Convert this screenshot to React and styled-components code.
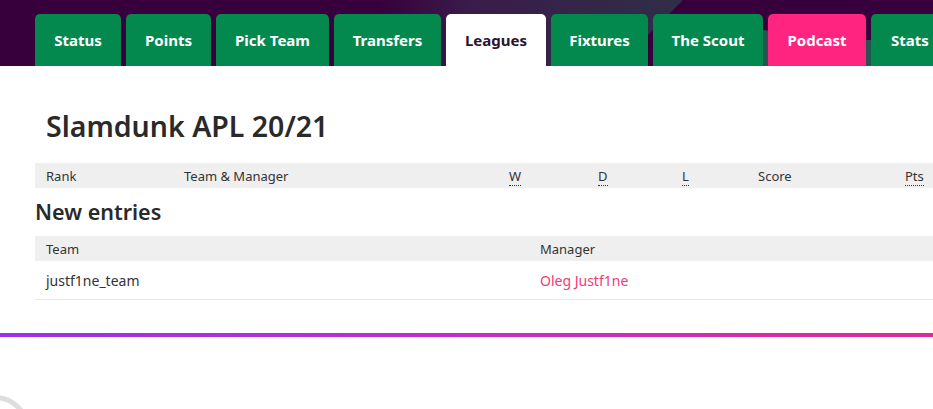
import React from "react";
import styled, { createGlobalStyle } from "styled-components";

const Global = createGlobalStyle`
  html, body { margin: 0; padding: 0; background: #fff; overflow: hidden; }
  body { font-family: "Noto Sans", "Open Sans", sans-serif; color: #37003c; }
`;

const Page = styled.div`
  width: 933px;
  height: 409px;
  position: relative;
  overflow: hidden;
`;

const Header = styled.header`
  position: relative;
  height: 66px;
  background: #37003c;
  overflow: hidden;
  &::before {
    content: "";
    position: absolute;
    inset: 0;
    background: linear-gradient(to right, #37003c 0px, #37003c 380px, #3a1c4a 470px, #2f2e48 680px);
    clip-path: polygon(0 0, 683px 0, 617px 66px, 0 66px);
  }
  &::after {
    content: "";
    position: absolute;
    inset: 0;
    background: #265450;
    clip-path: polygon(700px 66px, 740px 28px, 933px 46px, 933px 66px);
  }
`;

const Tabs = styled.nav`
  position: relative;
  z-index: 1;
  display: flex;
  gap: 5px;
  padding: 14px 0 0 35px;
  height: 52px;
`;

const Tab = styled.div`
  flex: none;
  width: ${(p) => p.$w}px;
  height: 52px;
  border-radius: 5px 5px 0 0;
  background: ${(p) => (p.$active ? "#ffffff" : p.$pink ? "#fe2480" : "#03884e")};
  color: ${(p) => (p.$active ? "#2b1430" : "#ffffff")};
  font-weight: 700;
  font-size: 15px;
  display: flex;
  align-items: center;
  justify-content: center;
  box-sizing: border-box;
  white-space: nowrap;
`;

const Main = styled.main`
  padding: 0 0 0 35px;
  width: 900px;
`;

const Title = styled.h2`
  margin: 0;
  padding: 40px 0 0 11px;
  height: 57px;
  font-size: 28.5px;
  font-weight: 600;
  color: #2a2a2a;
  line-height: 40px;
`;

const HeadRow = styled.div`
  display: grid;
  grid-template-columns: ${(p) => p.$cols};
  height: 25px;
  align-items: center;
  background: #efefef;
  font-size: 13px;
  color: #333;
  margin-top: ${(p) => p.$mt || 0}px;
`;

const Cell = styled.div`
  padding-left: 11px;
  white-space: nowrap;
`;

const Abbr = styled.abbr`
  text-decoration: none;
  border-bottom: 1px dotted #333;
`;

const SubTitle = styled.h3`
  margin: 0;
  padding-top: 12px;
  height: 36px;
  box-sizing: border-box;
  font-size: 21.5px;
  font-weight: 600;
  color: #2a2a2a;
  line-height: 24px;
`;

const BodyRow = styled.div`
  display: grid;
  grid-template-columns: ${(p) => p.$cols};
  height: 38px;
  align-items: center;
  border-bottom: 1px solid #e8e8e8;
  font-size: 14px;
  color: #333;
`;

const ManagerLink = styled.span`
  color: #f23a78;
`;

const Divider = styled.div`
  height: 4px;
  margin-top: 33px;
  width: 933px;
  background: linear-gradient(to right, #9a31ea, #c62ec6 55%, #e02a96);
`;

const Spinner = styled.div`
  position: absolute;
  left: -40px;
  top: 395px;
  width: 70px;
  height: 70px;
  border-radius: 50%;
  border: 5px solid #dedede;
  box-sizing: border-box;
`;

const tabs = [
  { t: "Status", w: 86 },
  { t: "Points", w: 85 },
  { t: "Pick Team", w: 113 },
  { t: "Transfers", w: 107 },
  { t: "Leagues", w: 100, active: true },
  { t: "Fixtures", w: 97 },
  { t: "The Scout", w: 110 },
  { t: "Podcast", w: 98, pink: true },
  { t: "Stats", w: 78 },
];

const standingCols = "138px 325px 89px 84px 76px 147px 41px";
const entryCols = "494px 1fr";

export default function App() {
  return (
    <Page>
      <Global />
      <Header>
        <Tabs>
          {tabs.map((x) => (
            <Tab key={x.t} $w={x.w} $active={x.active} $pink={x.pink}>
              {x.t}
            </Tab>
          ))}
        </Tabs>
      </Header>
      <Main>
        <Title>Slamdunk APL 20/21</Title>
        <HeadRow $cols={standingCols}>
          <Cell>Rank</Cell>
          <Cell>Team &amp; Manager</Cell>
          <Cell><Abbr title="Won">W</Abbr></Cell>
          <Cell><Abbr title="Drawn">D</Abbr></Cell>
          <Cell><Abbr title="Lost">L</Abbr></Cell>
          <Cell>Score</Cell>
          <Cell><Abbr title="Points">Pts</Abbr></Cell>
        </HeadRow>
        <SubTitle>New entries</SubTitle>
        <HeadRow $cols={entryCols} $mt={12}>
          <Cell>Team</Cell>
          <Cell>Manager</Cell>
        </HeadRow>
        <BodyRow $cols={entryCols}>
          <Cell>justf1ne_team</Cell>
          <Cell><ManagerLink>Oleg Justf1ne</ManagerLink></Cell>
        </BodyRow>
      </Main>
      <Divider />
      <Spinner />
    </Page>
  );
}
